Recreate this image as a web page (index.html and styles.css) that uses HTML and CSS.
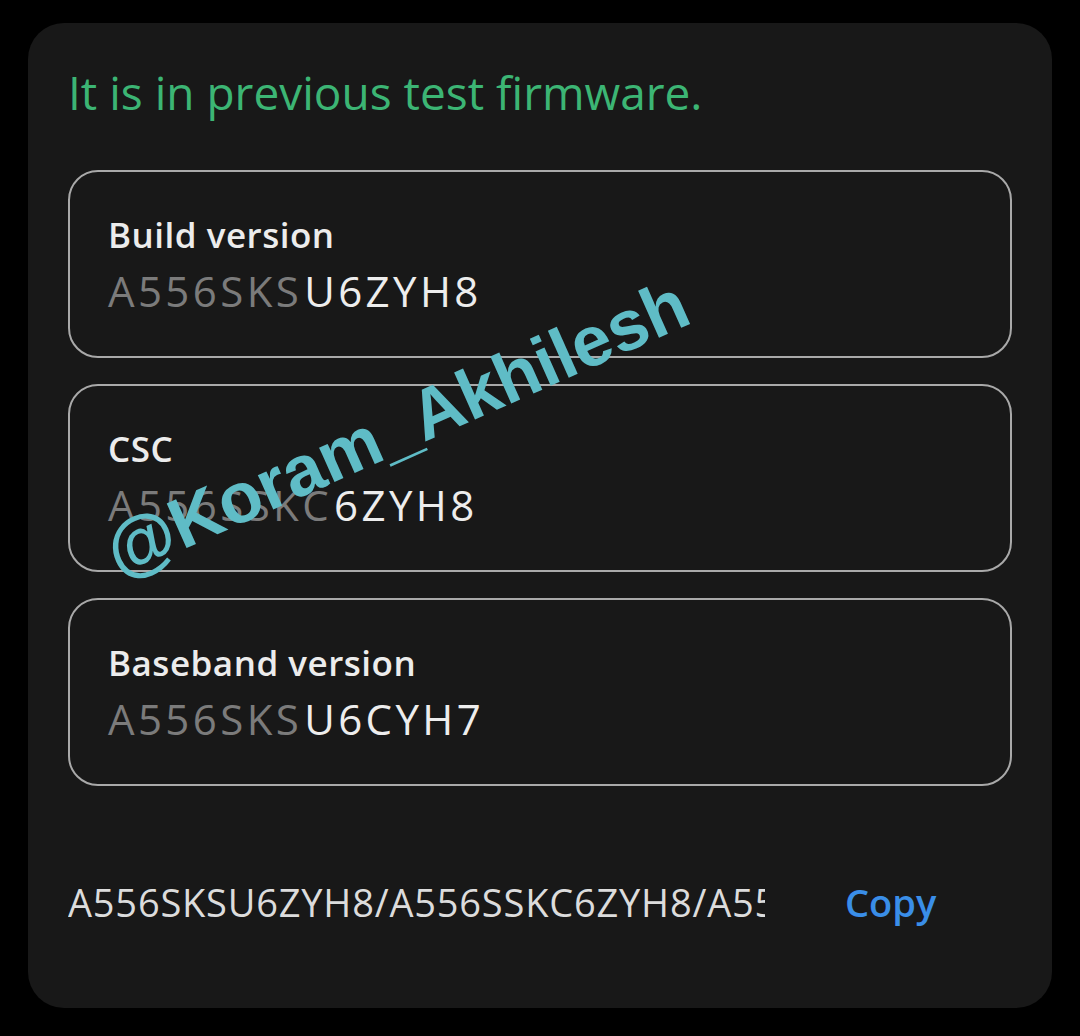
FILE: index.html
```html
<!DOCTYPE html>
<html lang="en">
<head>
    <meta charset="UTF-8">
    <title>Firmware info</title>
    <link rel="stylesheet" href="styles.css">
</head>
<body>
    <div class="dialog">
        <p class="status">It is in previous test firmware.</p>

        <div class="info-box">
            <div class="info-label">Build version</div>
            <div class="info-value"><span class="dim">A556SKS</span><span class="hi">U6ZYH8</span></div>
        </div>

        <div class="info-box">
            <div class="info-label">CSC</div>
            <div class="info-value"><span class="dim">A556SSKC</span><span class="hi">6ZYH8</span></div>
        </div>

        <div class="info-box">
            <div class="info-label">Baseband version</div>
            <div class="info-value"><span class="dim">A556SKS</span><span class="hi">U6CYH7</span></div>
        </div>

        <div class="summary">
            <div class="summary-text">A556SKSU6ZYH8/A556SSKC6ZYH8/A556SKSU6CYH7</div>
            <span class="copy">Copy</span>
        </div>

        <div class="watermark">@Koram_Akhilesh</div>
    </div>
</body>
</html>
```
FILE: styles.css
```css
body {
    margin: 0;
    background: #000;
    font-family: "Open Sans", "Noto Sans", sans-serif;
    width: 1080px;
    height: 1036px;
    overflow: hidden;
}
.dialog {
    position: relative;
    margin: 23px 28px 0 28px;
    height: 985px;
    box-sizing: border-box;
    padding: 0 40px;
    background: #181818;
    border-radius: 36px;
    overflow: hidden;
}
.status {
    margin: 0;
    padding-top: 38px;
    height: 147px;
    box-sizing: border-box;
    font-size: 46px;
    line-height: 62px;
    color: #3cb574;
}
.info-box {
    height: 188px;
    box-sizing: border-box;
    margin-bottom: 26px;
    padding: 38px 38px 0 38px;
    border: 2px solid #a9a9a9;
    border-radius: 30px;
}
.info-label {
    font-size: 35px;
    font-weight: 600;
    letter-spacing: 0.5px;
    line-height: 50px;
    color: #ececec;
}
.info-value {
    font-size: 42px;
    line-height: 62px;
    letter-spacing: 3.4px;
}
.dim {
    color: #7b7b7b;
    margin-right: 2px;
}
.hi {
    color: #ededed;
}
.summary {
    display: flex;
    align-items: center;
    margin-top: 86px;
    height: 60px;
}
.summary-text {
    width: 697px;
    overflow: hidden;
    white-space: nowrap;
    font-size: 38px;
    letter-spacing: 0.8px;
    color: #dcdcdc;
}
.copy {
    margin-left: 80px;
    font-size: 38px;
    font-weight: 600;
    color: #3a8ee8;
}
.watermark {
    position: absolute;
    left: 54px;
    top: 365px;
    width: 630px;
    font-family: "Liberation Sans", Arial, sans-serif;
    font-weight: bold;
    font-size: 71px;
    line-height: 80px;
    white-space: nowrap;
    color: #5fbcc6;
    transform: rotate(-24deg);
}
```
